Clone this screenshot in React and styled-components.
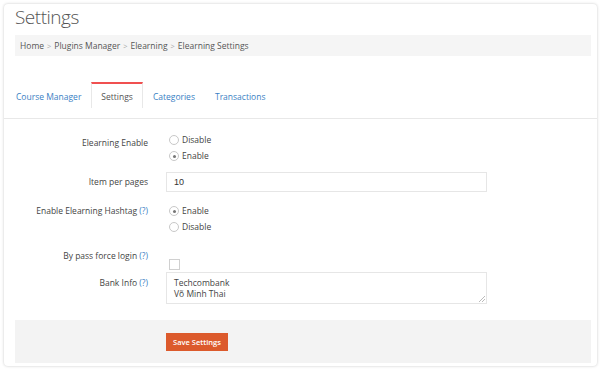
import styled, { createGlobalStyle } from "styled-components";

const Global = createGlobalStyle`
  body {
    margin: 0;
    background: #fff;
    font-family: "Open Sans", "Liberation Sans", sans-serif;
    color: #555;
  }
`;

const Card = styled.div`
  margin: 4px 5px 4px 4px;
  height: 362px;
  box-sizing: border-box;
  border-radius: 4px;
  box-shadow: 0 0 3px rgba(0, 0, 0, 0.22);
  background: #fff;
  padding: 0 6px 0 11px;
  overflow: hidden;
`;

const Title = styled.h1`
  margin: 0;
  padding-top: 1px;
  font-size: 19px;
  line-height: 24px;
  font-weight: 300;
  color: #555;
  letter-spacing: -0.5px;
`;

const Breadcrumb = styled.div`
  margin-top: 6px;
  height: 21px;
  background: #f5f5f5;
  display: flex;
  align-items: center;
  padding-left: 5px;
  font-size: 8.5px;
  color: #555;
  gap: 3px;
`;

const Sep = styled.span`
  color: #aaa;
  font-size: 7.5px;
`;

const Tabs = styled.div`
  display: flex;
  margin-top: 26px;
  margin-left: -11px;
  margin-right: -6px;
  padding-left: 11px;
  height: 36px;
  border-bottom: 1px solid #e8e8e8;
`;

const Tab = styled.div`
  height: 26px;
  box-sizing: border-box;
  padding: 0 9px;
  display: flex;
  align-items: center;
  font-size: 8.5px;
  color: ${(p) => (p.$active ? "#555" : "#3a7fc4")};
  border-top: 2px solid ${(p) => (p.$active ? "#f05050" : "transparent")};
  border-left: 1px solid ${(p) => (p.$active ? "#e8e8e8" : "transparent")};
  border-right: 1px solid ${(p) => (p.$active ? "#e8e8e8" : "transparent")};
  &:first-child {
    padding-left: 0;
  }
`;

const Form = styled.div`
  padding-top: 15px;
`;

const Row = styled.div`
  display: grid;
  grid-template-columns: 133px 1fr;
  column-gap: 18px;
  margin-bottom: ${(p) => p.$mb || 0}px;
  align-items: ${(p) => p.$align || "start"};
`;

const Label = styled.div`
  text-align: right;
  font-size: 8.5px;
  color: #444;
  padding-top: ${(p) => p.$pt || 0}px;
  line-height: 12px;
`;

const Help = styled.span`
  color: #3a7fc4;
`;

const Options = styled.div`
  display: flex;
  flex-direction: column;
  gap: 4px;
  padding-left: 3px;
`;

const Option = styled.div`
  display: flex;
  align-items: center;
  gap: 3px;
  font-size: 8.5px;
  line-height: 12px;
  color: #444;
`;

const Radio = styled.span`
  width: 8px;
  height: 8px;
  border-radius: 50%;
  border: 1px solid #c8c8c8;
  background: #fff;
  display: flex;
  align-items: center;
  justify-content: center;
  &::after {
    content: "";
    width: 3px;
    height: 3px;
    border-radius: 50%;
    background: ${(p) => (p.$checked ? "#777" : "transparent")};
  }
`;

const Input = styled.div`
  width: 321px;
  height: 20px;
  box-sizing: border-box;
  border: 1px solid #e6e6e6;
  display: flex;
  align-items: center;
  padding-left: 7px;
  font-size: 9px;
  color: #333;
  font-family: "Liberation Sans", sans-serif;
`;

const Checkbox = styled.span`
  display: block;
  width: 9px;
  height: 9px;
  border: 1px solid #d0d0d0;
  margin: 9px 0 0 3px;
`;

const TextArea = styled.div`
  position: relative;
  width: 321px;
  height: 32px;
  box-sizing: border-box;
  border: 1px solid #e6e6e6;
  padding: 4px 7px;
  font-size: 8.5px;
  line-height: 11px;
  color: #444;
`;

const Grip = styled.svg`
  position: absolute;
  right: 1px;
  bottom: 1px;
`;

const Footer = styled.div`
  margin-top: 16px;
  height: 43px;
  background: #f3f3f3;
  display: flex;
  align-items: center;
  padding-left: 151px;
`;

const Button = styled.button`
  height: 18px;
  width: 62px;
  border: none;
  background: #dc5a2c;
  color: #fff;
  font-family: "Open Sans", "Liberation Sans", sans-serif;
  font-size: 7.5px;
  font-weight: 600;
  padding: 0;
  margin-top: 1px;
`;

export default function App() {
  return (
    <>
      <Global />
      <Card>
        <Title>Settings</Title>
        <Breadcrumb>
          <span>Home</span>
          <Sep>&gt;</Sep>
          <span>Plugins Manager</span>
          <Sep>&gt;</Sep>
          <span>Elearning</span>
          <Sep>&gt;</Sep>
          <span>Elearning Settings</span>
        </Breadcrumb>
        <Tabs>
          <Tab>Course Manager</Tab>
          <Tab $active>Settings</Tab>
          <Tab>Categories</Tab>
          <Tab>Transactions</Tab>
        </Tabs>
        <Form>
          <Row $mb={10}>
            <Label $pt={3}>Elearning Enable</Label>
            <Options>
              <Option>
                <Radio />
                Disable
              </Option>
              <Option>
                <Radio $checked />
                Enable
              </Option>
            </Options>
          </Row>
          <Row $mb={13} $align="center">
            <Label>Item per pages</Label>
            <Input>10</Input>
          </Row>
          <Row $mb={17}>
            <Label>
              Enable Elearning Hashtag <Help>(?)</Help>
            </Label>
            <Options>
              <Option>
                <Radio $checked />
                Enable
              </Option>
              <Option>
                <Radio />
                Disable
              </Option>
            </Options>
          </Row>
          <Row $mb={2}>
            <Label>
              By pass force login <Help>(?)</Help>
            </Label>
            <div>
              <Checkbox />
            </div>
          </Row>
          <Row>
            <Label $pt={5}>
              Bank Info <Help>(?)</Help>
            </Label>
            <TextArea>
              Techcombank
              <br />
              Võ Minh Thai
              <Grip width="6" height="6" viewBox="0 0 6 6">
                <path d="M6 0 L0 6 M6 3 L3 6" stroke="#aaa" strokeWidth="0.8" />
              </Grip>
            </TextArea>
          </Row>
        </Form>
        <Footer>
          <Button>Save Settings</Button>
        </Footer>
      </Card>
    </>
  );
}
